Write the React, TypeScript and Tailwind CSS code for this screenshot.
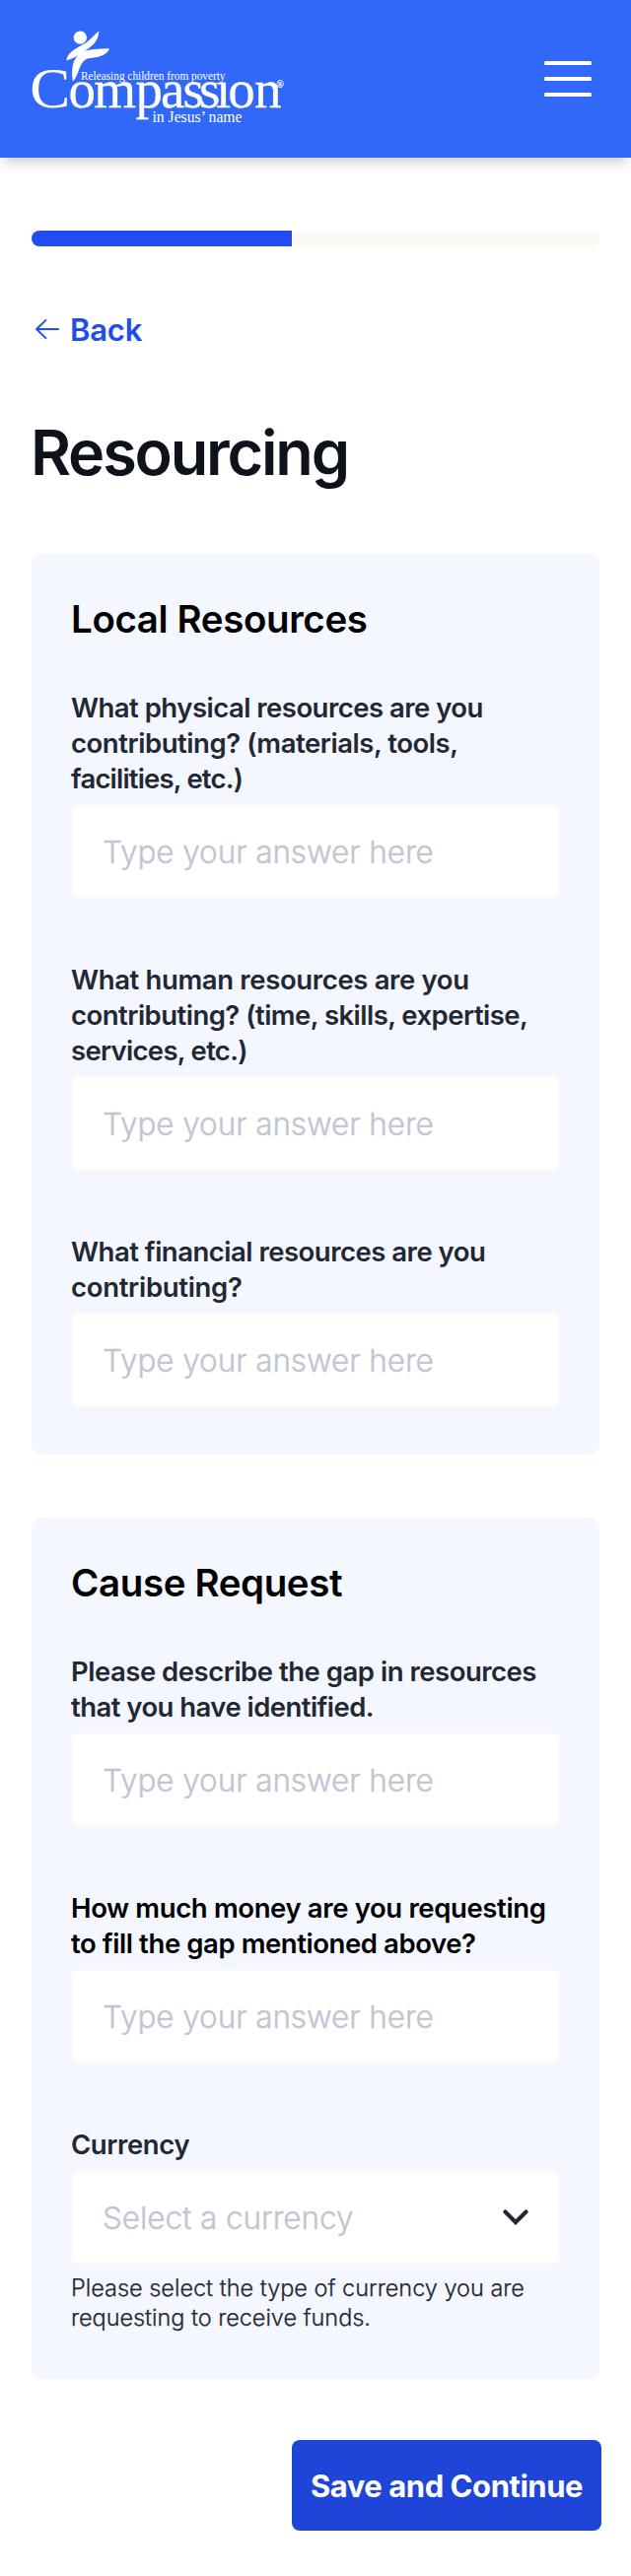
import type { ReactNode } from 'react';

type Line = { text: string; tracking: string };

type FieldProps = {
  lines: Line[];
  placeholder: string;
  tone?: string;
  icon?: ReactNode;
  help?: Line[];
};

function Logo() {
  return (
    <svg
      width="300"
      height="160"
      viewBox="0 0 300 160"
      fill="#fff"
      className="block shrink-0 font-['Liberation_Serif',serif]"
      role="img"
      aria-label="Compassion"
    >
      <circle cx="81.3" cy="38.2" r="6.6" />
      <path d="M99.800 32C96 34.500 93 39.500 87 43.500C79 48.500 68.500 52 67.300 61.500C73 59.500 78 57.500 84 53C93 47.500 100 42 100.300 32Z" />
      <path d="M111 49.300C102 49.600 88 49.500 82 53.500C74 59.500 72 68 73.800 82.600C76.500 80.500 77.500 77 79.500 72.500C82 65.500 84 61.500 89 59.300C97 58.500 108 57.500 111 49.300Z" />
      <text x="30.300" y="109" fontSize="56" textLength="41" lengthAdjust="spacingAndGlyphs">C</text>
      <text x="69.5 95.3 137.500 163 185.500 202 219 231.300 258" y="109" fontSize="55" stroke="#fff" strokeWidth="0.3">
        ompassıon
      </text>
      <text x="280.500" y="89" fontSize="9.500" stroke="#fff" strokeWidth="0.2">®</text>
      <text x="82" y="81" fontSize="12" textLength="146.500" lengthAdjust="spacingAndGlyphs">Releasing children from poverty</text>
      <text x="154.500" y="124" fontSize="16.500" textLength="91" lengthAdjust="spacingAndGlyphs">in Jesus’ name</text>
    </svg>
  );
}

function MenuButton() {
  return (
    <button type="button" aria-label="Menu" className="flex w-12 flex-col gap-3">
      <span className="h-1 rounded-[1.5px] bg-white" />
      <span className="h-1 rounded-[1.5px] bg-white" />
      <span className="h-1 rounded-[1.5px] bg-white" />
    </button>
  );
}

function ArrowLeft() {
  return (
    <svg width="24" height="20" viewBox="0 0 24 20" fill="none" stroke="currentColor" strokeWidth="1.9" strokeLinecap="round" strokeLinejoin="round">
      <path d="M23 10H1M10.500 0.900L1 10L10.500 19.100" />
    </svg>
  );
}

function ChevronDown() {
  return (
    <svg width="26" height="16" viewBox="0 0 26 16" fill="none" stroke="#232733" strokeWidth="4.2" strokeLinecap="round">
      <path d="M2.500 2.500L13 13L23.500 2.500" strokeLinejoin="miter" />
    </svg>
  );
}

function Field({ lines, placeholder, tone = 'text-[#232733]', icon, help }: FieldProps) {
  return (
    <div className="flex flex-col">
      <div className={`flex flex-col text-[27.5px] leading-9 font-semibold whitespace-nowrap ${tone}`}>
        {lines.map((l) => (
          <span key={l.text} className={l.tracking}>
            {l.text}
          </span>
        ))}
      </div>
      <div className="mt-2 flex h-24 items-center justify-between rounded-lg border-2 border-[#fdf9f4] bg-white px-[30px]">
        <span className="pt-0.5 text-[31.5px] leading-10 font-light tracking-[-0.08px] text-[#c2c5d1] [-webkit-text-stroke:0.4px_#c2c5d1]">
          {placeholder}
        </span>
        {icon}
      </div>
      {help && (
        <div className="mt-[9px] -mb-px flex flex-col text-[23.5px] leading-[30px] font-light whitespace-nowrap text-[#232733] [-webkit-text-stroke:0.25px_#232733]">
          {help.map((l) => (
            <span key={l.text} className={l.tracking}>
              {l.text}
            </span>
          ))}
        </div>
      )}
    </div>
  );
}

function Card({ title, children }: { title: string; children: ReactNode }) {
  return (
    <section className="rounded-[10px] bg-[#f4f7ff] px-10 pt-[42px] pb-12">
      <h2 className="mb-12 text-[38.5px] leading-[48px] font-semibold tracking-[-0.38px] text-black">{title}</h2>
      <div className="flex flex-col gap-16">{children}</div>
    </section>
  );
}

export default function App() {
  return (
    <div className="min-h-[2614px] w-[640px] bg-white font-['Inter',sans-serif]">
      <header className="flex h-40 items-center justify-between bg-[#3168fa] pr-10 shadow-[0_8px_12px_-4px_rgba(0,0,0,0.22)]">
        <Logo />
        <MenuButton />
      </header>

      <main className="px-8 pt-[74px]">
        <div className="h-4 overflow-hidden rounded-full bg-[#fdf9f4]">
          <div className="h-full w-[264px] bg-[#214cf0]" />
        </div>

        <a className="mt-[64px] flex h-10 items-center gap-[11px] pl-1 text-[31px] leading-10 font-semibold tracking-[-0.2px] text-[#214cf0]">
          <ArrowLeft />
          <span className="pt-0.5">Back</span>
        </a>

        <h1 className="mt-[65px] -ml-px text-[63px] leading-[80px] font-semibold tracking-[-2.2px] text-[#0e121b]">Resourcing</h1>

        <div className="mt-[63px] flex flex-col gap-16">
          <Card title="Local Resources">
            <Field
              lines={[
                { text: 'What physical resources are you', tracking: 'tracking-[-0.52px]' },
                { text: 'contributing? (materials, tools,', tracking: 'tracking-[-0.45px]' },
                { text: 'facilities, etc.)', tracking: 'tracking-[-0.8px]' },
              ]}
              placeholder="Type your answer here"
            />
            <Field
              lines={[
                { text: 'What human resources are you', tracking: 'tracking-[-0.36px]' },
                { text: 'contributing? (time, skills, expertise,', tracking: 'tracking-[-0.52px]' },
                { text: 'services, etc.)', tracking: 'tracking-[-0.7px]' },
              ]}
              placeholder="Type your answer here"
            />
            <Field
              lines={[
                { text: 'What financial resources are you', tracking: 'tracking-[-0.5px]' },
                { text: 'contributing?', tracking: 'tracking-[-0.3px]' },
              ]}
              placeholder="Type your answer here"
            />
          </Card>

          <Card title="Cause Request">
            <Field
              lines={[
                { text: 'Please describe the gap in resources', tracking: 'tracking-[-0.49px]' },
                { text: 'that you have identified.', tracking: 'tracking-[-0.55px]' },
              ]}
              placeholder="Type your answer here"
            />
            <Field
              tone="text-black"
              lines={[
                { text: 'How much money are you requesting', tracking: 'tracking-[-0.37px]' },
                { text: 'to fill the gap mentioned above?', tracking: 'tracking-[-0.42px]' },
              ]}
              placeholder="Type your answer here"
            />
            <Field
              lines={[{ text: 'Currency', tracking: 'tracking-[-0.4px]' }]}
              placeholder="Select a currency"
              icon={<ChevronDown />}
              help={[
                { text: 'Please select the type of currency you are', tracking: 'tracking-[-0.02px]' },
                { text: 'requesting to receive funds.', tracking: 'tracking-[-0.05px]' },
              ]}
            />
          </Card>
        </div>

        <div className="mt-[62px] -mr-0.5 flex justify-end">
          <button type="button" className="h-[92px] w-[314px] rounded-lg bg-[#1e44d8] pt-0.5 text-[31px] leading-10 font-bold tracking-[-0.45px] whitespace-nowrap text-white">
            Save and Continue
          </button>
        </div>
      </main>
    </div>
  );
}
